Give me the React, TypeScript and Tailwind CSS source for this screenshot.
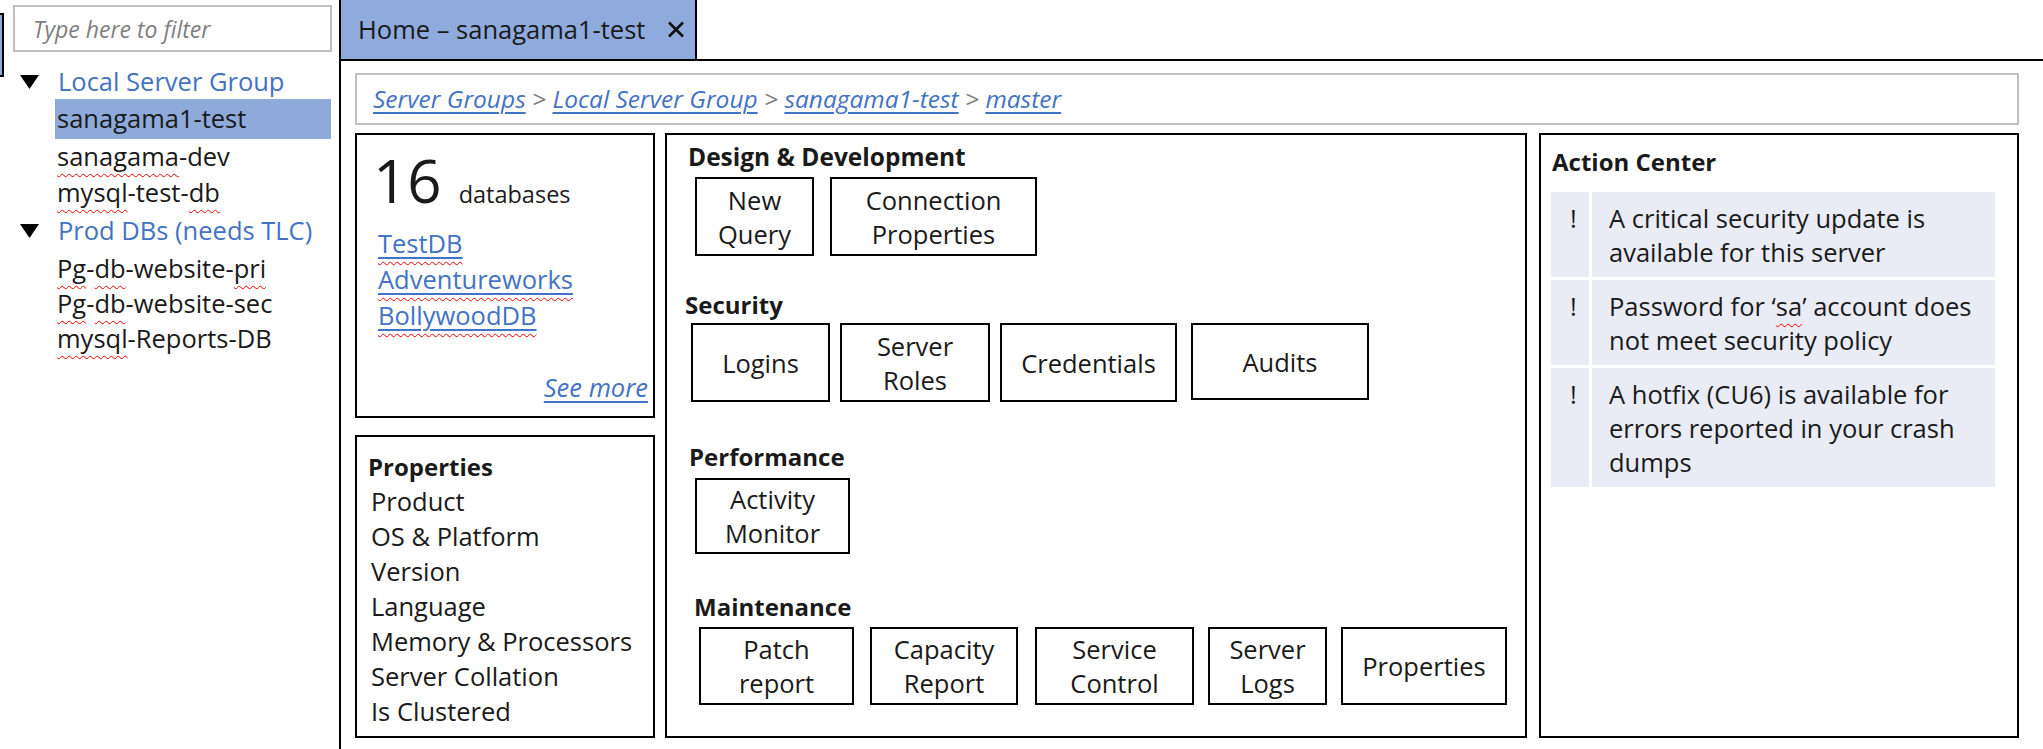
import React from "react";

const BLUE = "text-[#4472c4]";

function Squig({ children }: { children: React.ReactNode }) {
  return (
    <span className="underline decoration-wavy decoration-[#ff0000] decoration-1 underline-offset-[7px]">
      {children}
    </span>
  );
}

function DbLink({ children }: { children: React.ReactNode }) {
  return (
    <div className={BLUE}>
      <span className="underline decoration-wavy decoration-[#ff0000] decoration-1 underline-offset-[8px]">
        <span className="underline decoration-[#4472c4] decoration-2 underline-offset-[4px]">{children}</span>
      </span>
    </div>
  );
}

function Tri() {
  return (
    <svg width="19" height="14" viewBox="0 0 19 14" className="shrink-0">
      <polygon points="0,0 19,0 9.5,14" fill="#000" />
    </svg>
  );
}

function Btn({ w, h, children }: { w: string; h: string; children: React.ReactNode }) {
  return (
    <div className={`flex items-center justify-center border-2 border-black text-center leading-[34px] ${w} ${h}`}>
      <div>{children}</div>
    </div>
  );
}

function Crumb({ children }: { children: React.ReactNode }) {
  return <span className="text-[#4472c4] underline decoration-[#4472c4] decoration-2 underline-offset-[4px]">{children}</span>;
}

function Sep() {
  return <span className="text-[#7f7f7f]"> &gt; </span>;
}

export default function App() {
  return (
    <div className="flex h-[749px] w-[2043px] overflow-hidden bg-white font-['Open_Sans',sans-serif] text-[25.5px] text-[#1a1a1a]">
      {/* Left pane */}
      <aside className="flex w-[341px] shrink-0 border-r-2 border-black">
        <div className="mt-[13px] h-[64px] w-[4px] shrink-0 border-y-2 border-r-2 border-black bg-[#8faadc]" />
        <div className="ml-[9px] flex flex-col">
          <input
            placeholder="Type here to filter"
            className="mt-[5px] h-[47px] w-[319px] border-2 border-[#bfbfbf] pl-[18px] text-[23px] italic outline-none placeholder:text-[#7f7f7f]"
          />
          <div className="mt-[12px] flex flex-col">
            <div className="flex h-[35px] items-center">
              <div className="ml-[7px]"><Tri /></div>
              <span className={`ml-[19px] leading-none ${BLUE}`}>Local Server Group</span>
            </div>
            <div className="ml-[42px] flex h-[40px] w-[276px] items-center bg-[#8eaadb] pl-[2px]">
              <span className="leading-none">sanagama1-test</span>
            </div>
            <div className="ml-[42px] flex h-[36px] items-center pl-[2px]">
              <span className="leading-none"><Squig>sanagama</Squig>-dev</span>
            </div>
            <div className="ml-[42px] flex h-[36px] items-center pl-[2px]">
              <span className="leading-none"><Squig>mysql</Squig>-test-<Squig>db</Squig></span>
            </div>
            <div className="flex h-[40px] items-center">
              <div className="ml-[7px]"><Tri /></div>
              <span className={`ml-[19px] leading-none ${BLUE}`}>Prod DBs (needs TLC)</span>
            </div>
            <div className="ml-[42px] flex h-[35px] items-center pl-[2px]">
              <span className="leading-none"><Squig>Pg</Squig>-<Squig>db</Squig>-website-<Squig>pri</Squig></span>
            </div>
            <div className="ml-[42px] flex h-[35px] items-center pl-[2px]">
              <span className="leading-none"><Squig>Pg</Squig>-<Squig>db</Squig>-website-sec</span>
            </div>
            <div className="ml-[42px] flex h-[35px] items-center pl-[2px]">
              <span className="leading-none"><Squig>mysql</Squig>-Reports-DB</span>
            </div>
          </div>
        </div>
      </aside>

      {/* Main */}
      <main className="flex min-w-0 flex-1 flex-col">
        <div className="flex h-[61px] shrink-0 border-b-2 border-black">
          <div className="flex w-[356px] items-center border-r-2 border-black bg-[#8faadc] pl-[17px]">
            <span>Home – sanagama1-test</span>
            <svg width="18" height="17" viewBox="0 0 18 17" className="ml-auto mr-[10px]">
              <path d="M2 1.5 L16 15.5 M16 1.5 L2 15.5" stroke="#111" strokeWidth="2.6" />
            </svg>
          </div>
        </div>

        <div className="ml-[14px] mt-[12px] flex h-[52px] w-[1664px] items-center border-2 border-[#bfbfbf] pl-[16px] text-[24.5px] italic">
          <span>
            <Crumb>Server Groups</Crumb>
            <Sep />
            <Crumb>Local Server Group</Crumb>
            <Sep />
            <Crumb>sanagama1-test</Crumb>
            <Sep />
            <Crumb>master</Crumb>
          </span>
        </div>

        <div className="ml-[14px] mt-[8px] flex h-[605px]">
          {/* Left column */}
          <div className="flex w-[300px] flex-col gap-[17px]">
            <div className="flex h-[285px] flex-col border-2 border-black pl-[21px] pr-[5px]">
              <div className="ml-[-5px] mt-[15px] flex items-baseline">
                <span className="text-[60px] leading-none">16</span>
                <span className="ml-[17px] text-[23.5px]">databases</span>
              </div>
              <div className="mt-[13px] flex flex-col leading-[36px]">
                <DbLink>TestDB</DbLink>
                <DbLink>Adventureworks</DbLink>
                <DbLink>BollywoodDB</DbLink>
              </div>
              <div className="mb-[11px] mt-auto text-right italic leading-[36px]">
                <span className="text-[#4472c4] underline decoration-[#4472c4] decoration-2 underline-offset-[4px]">See more</span>
              </div>
            </div>
            <div className="h-[303px] border-2 border-black pt-[12px] leading-[35px]">
              <div className="pl-[11px] text-[24px] font-bold">Properties</div>
              {["Product", "OS & Platform", "Version", "Language", "Memory & Processors", "Server Collation", "Is Clustered"].map((t) => (
                <div key={t} className="pl-[14px]">{t}</div>
              ))}
            </div>
          </div>

          {/* Tasks panel */}
          <div className="ml-[10px] flex w-[862px] flex-col border-2 border-black leading-[34px]">
            <div className="ml-[21px] mt-[5px] text-[24.5px] font-bold">Design &amp; Development</div>
            <div className="ml-[28px] mt-[3px] flex gap-[16px]">
              <Btn w="w-[119px]" h="h-[79px]">New<br />Query</Btn>
              <Btn w="w-[207px]" h="h-[79px]">Connection<br />Properties</Btn>
            </div>

            <div className="ml-[18px] mt-[32px] text-[24px] font-bold">Security</div>
            <div className="ml-[24px] mt-[1px] flex">
              <Btn w="w-[139px]" h="h-[79px]">Logins</Btn>
              <div className="ml-[10px]"><Btn w="w-[150px]" h="h-[79px]">Server<br />Roles</Btn></div>
              <div className="ml-[10px]"><Btn w="w-[177px]" h="h-[79px]">Credentials</Btn></div>
              <div className="ml-[14px]"><Btn w="w-[178px]" h="h-[77px]">Audits</Btn></div>
            </div>

            <div className="ml-[22px] mt-[38px] text-[24px] font-bold">Performance</div>
            <div className="ml-[28px] mt-[4px] flex">
              <Btn w="w-[155px]" h="h-[76px]">Activity<br />Monitor</Btn>
            </div>

            <div className="ml-[27px] mt-[36px] text-[24px] font-bold">Maintenance</div>
            <div className="ml-[32px] mt-[3px] flex">
              <Btn w="w-[155px]" h="h-[78px]">Patch<br />report</Btn>
              <div className="ml-[16px]"><Btn w="w-[148px]" h="h-[78px]">Capacity<br />Report</Btn></div>
              <div className="ml-[17px]"><Btn w="w-[159px]" h="h-[78px]">Service<br />Control</Btn></div>
              <div className="ml-[14px]"><Btn w="w-[119px]" h="h-[78px]">Server<br />Logs</Btn></div>
              <div className="ml-[14px]"><Btn w="w-[166px]" h="h-[78px]">Properties</Btn></div>
            </div>
          </div>

          {/* Action center */}
          <div className="ml-[12px] w-[480px] border-2 border-black pl-[10px]">
            <div className="mt-[10px] pl-[1px] text-[24px] font-bold leading-[34px]">Action Center</div>
            <div className="mt-[13px] grid w-[444px] grid-cols-[38px_403px] gap-[3px] leading-[34px]">
              <div className="bg-[#e9ebf5] pb-[8px] pl-[19px] pt-[9px]">!</div>
              <div className="whitespace-nowrap bg-[#e9ebf5] pb-[8px] pl-[17px] pt-[9px]">
                A critical security update is<br />available for this server
              </div>
              <div className="bg-[#e9ebf5] pb-[8px] pl-[19px] pt-[9px]">!</div>
              <div className="whitespace-nowrap bg-[#e9ebf5] pb-[8px] pl-[17px] pt-[9px]">
                Password for ‘<Squig>sa</Squig>’ account does<br />not meet security policy
              </div>
              <div className="bg-[#e9ebf5] pb-[8px] pl-[19px] pt-[9px]">!</div>
              <div className="whitespace-nowrap bg-[#e9ebf5] pb-[8px] pl-[17px] pt-[9px]">
                A hotfix (CU6) is available for<br />errors reported in your crash<br />dumps
              </div>
            </div>
          </div>
        </div>
      </main>
    </div>
  );
}
